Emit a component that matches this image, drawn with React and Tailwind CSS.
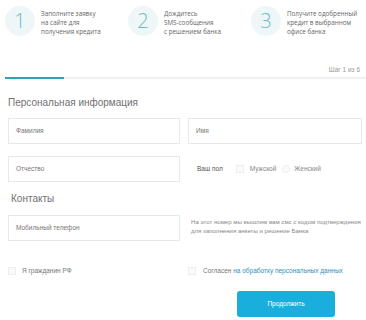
export default function App() {
  const steps = [
    { n: "1", lines: ["Заполните заявку", "на сайте для", "получения кредита"] },
    { n: "2", lines: ["Дождитесь", "SMS-сообщения", "с решением банка"] },
    { n: "3", lines: ["Получите одобренный", "кредит в выбранном", "офисе банка"] },
  ];
  return (
    <div className="w-[366px] h-[320px] bg-white overflow-hidden text-[#666]" style={{ fontFamily: '"Liberation Sans", Arial, sans-serif' }}>
      <div className="flex pl-[5px] pt-[6px] h-[36px]" style={{ fontFamily: '"Open Sans", Arial, sans-serif' }}>
        {steps.map((s) => (
          <div key={s.n} className="flex w-[123px] shrink-0 items-start">
            <div className="w-[30px] h-[30px] rounded-full bg-[#eef6f8] flex items-center justify-center text-[20px] font-light text-[#6cbccb] leading-none shrink-0">
              {s.n}
            </div>
            <div className="ml-[6px] mt-[3px] text-[6.3px] leading-[9px] text-[#666] whitespace-nowrap">
              {s.lines.map((l) => (
                <div key={l}>{l}</div>
              ))}
            </div>
          </div>
        ))}
      </div>
      <div className="flex justify-end pr-[6px] mt-[29px] text-[6.5px] leading-[9px] text-[#999]">Шаг 1 из 6</div>
      <div className="relative mt-[3px] h-[2px] bg-[#f0f0f0] ml-[5px]">
        <div className="absolute left-0 top-0 h-[2px] w-[59px] bg-[#2ea3b5]"></div>
      </div>
      <div className="pl-[8px] mt-[18px] text-[10px] leading-[12px] text-[#707070]">Персональная информация</div>
      <div className="grid grid-cols-[172px_174px] gap-x-[8px] px-[8px] mt-[9px]">
        <div className="h-[26px] border border-[#e8e8e8] flex items-center pl-[7px] text-[6.5px] text-[#777]">Фамилия</div>
        <div className="h-[26px] border border-[#e8e8e8] flex items-center pl-[7px] text-[6.5px] text-[#777]">Имя</div>
      </div>
      <div className="grid grid-cols-[172px_174px] gap-x-[8px] px-[8px] mt-[12px]">
        <div className="h-[26px] border border-[#e8e8e8] flex items-center pl-[7px] text-[6.5px] text-[#777]">Отчество</div>
        <div className="h-[26px] flex items-center pl-[9px] text-[6.5px] text-[#555]">
          <span>Ваш пол</span>
          <span className="ml-[13px] w-[8px] h-[8px] border border-[#eee] bg-[#fafafa] inline-block"></span>
          <span className="ml-[6px] text-[#888]">Мужской</span>
          <span className="ml-[6px] w-[8px] h-[8px] border border-[#eee] bg-[#fafafa] rounded-full inline-block"></span>
          <span className="ml-[4px] text-[#888]">Женский</span>
        </div>
      </div>
      <div className="pl-[11px] mt-[11px] text-[10px] leading-[12px] text-[#707070]">Контакты</div>
      <div className="grid grid-cols-[172px_174px] gap-x-[8px] px-[8px] mt-[10px]">
        <div className="h-[26px] border border-[#e8e8e8] flex items-center pl-[7px] text-[6.5px] text-[#777]">Мобильный телефон</div>
        <div className="pl-[3px] pt-[2px] text-[6.1px] leading-[9px] text-[#888] whitespace-nowrap">
          <div>На этот номер мы вышлем вам смс с кодом подтверждения</div>
          <div>для заполнения анкеты и решение Банка</div>
        </div>
      </div>
      <div className="grid grid-cols-[172px_174px] gap-x-[8px] px-[8px] mt-[25px]">
        <div className="flex items-center text-[6.5px] text-[#777]">
          <span className="w-[8px] h-[8px] border border-[#eee] bg-[#fafafa] inline-block"></span>
          <span className="ml-[6px]">Я гражданин РФ</span>
        </div>
        <div className="flex items-center text-[6.5px] text-[#777]">
          <span className="w-[8px] h-[8px] border border-[#eee] bg-[#fafafa] inline-block"></span>
          <span className="ml-[7px] whitespace-nowrap">Согласен <span className="text-[#2f8fb8]">на обработку персональных данных</span></span>
        </div>
      </div>
      <div className="flex pl-[237px] mt-[15px]">
        <div className="w-[98px] h-[26px] rounded-[3px] bg-[#1aaedc] flex items-center justify-center text-white text-[6.5px]">Продолжить</div>
      </div>
    </div>
  );
}
